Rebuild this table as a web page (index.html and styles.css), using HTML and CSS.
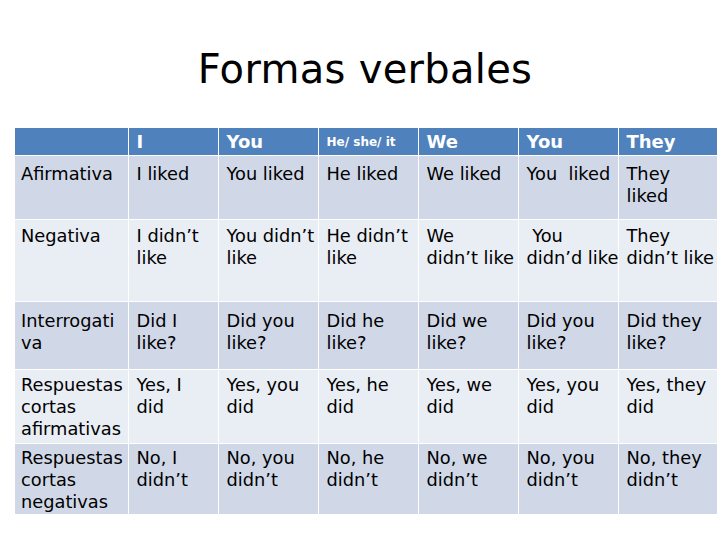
FILE: index.html
```html
<!DOCTYPE html>
<html>
<head>
<meta charset="utf-8">
<link rel="stylesheet" href="styles.css">
</head>
<body>
<div class="slide">
  <h1 class="title">Formas verbales</h1>
  <table class="verbs">
    <colgroup>
      <col class="c0"><col class="c1"><col class="c2"><col class="c3"><col class="c4"><col class="c5"><col class="c6">
    </colgroup>
    <tr class="head">
      <th></th><th>I</th><th>You</th><th class="small">He/ she/ it</th><th>We</th><th>You</th><th>They</th>
    </tr>
    <tr class="dark r1">
      <td>Afirmativa</td><td>I liked</td><td>You liked</td><td>He liked</td><td>We liked</td><td>You&nbsp; liked</td><td>They<br>liked</td>
    </tr>
    <tr class="light r2">
      <td>Negativa</td><td>I didn’t<br>like</td><td>You didn’t<br>like</td><td>He didn’t<br>like</td><td>We<br>didn’t like</td><td>&nbsp;You<br>didn’d like</td><td>They<br>didn’t like</td>
    </tr>
    <tr class="dark r3">
      <td>Interrogati<br>va</td><td>Did I<br>like?</td><td>Did you<br>like?</td><td>Did he<br>like?</td><td>Did we<br>like?</td><td>Did you<br>like?</td><td>Did they<br>like?</td>
    </tr>
    <tr class="light r4">
      <td>Respuestas<br>cortas<br>afirmativas</td><td>Yes, I<br>did</td><td>Yes, you<br>did</td><td>Yes, he<br>did</td><td>Yes, we<br>did</td><td>Yes, you<br>did</td><td>Yes, they<br>did</td>
    </tr>
    <tr class="dark r5">
      <td>Respuestas<br>cortas<br>negativas</td><td>No, I<br>didn’t</td><td>No, you<br>didn’t</td><td>No, he<br>didn’t</td><td>No, we<br>didn’t</td><td>No, you<br>didn’t</td><td>No, they<br>didn’t</td>
    </tr>
  </table>
</div>
</body>
</html>
```

FILE: styles.css
```css
html, body {
  margin: 0;
  padding: 0;
  background: #ffffff;
}
body {
  width: 728px;
  height: 546px;
  overflow: hidden;
  font-family: "Comic Sans MS", "DejaVu Sans", sans-serif;
  color: #000;
}
.slide {
  padding-left: 15px;
}
.title {
  margin: 0;
  height: 128px;
  box-sizing: border-box;
  padding-top: 44px;
  width: 700px;
  text-align: center;
  font-weight: normal;
  font-size: 40px;
  line-height: 50px;
  letter-spacing: 0.3px;
}
.verbs {
  border-collapse: collapse;
  table-layout: fixed;
  width: 702px;
  font-size: 17.8px;
  line-height: 22px;
}
.c0 { width: 113px; }
.c1 { width: 90px; }
.c2, .c3, .c4, .c5 { width: 100px; }
.c6 { width: 99px; }
.verbs th, .verbs td {
  border: 1px solid #ffffff;
  padding: 0 2px 0 6px;
  text-align: left;
  vertical-align: top;
  white-space: nowrap;
  overflow: hidden;
}
.verbs td:not(:first-child), .verbs th:not(:first-child) {
  padding-left: 8px;
}
.verbs td:first-child, .verbs th:first-child {
  border-left: none;
}
.verbs td:last-child, .verbs th:last-child {
  border-right: none;
}
.head th {
  background: #4f81bd;
  color: #ffffff;
  font-weight: bold;
  font-size: 18px;
  height: 27px;
  padding-top: 3px;
  box-sizing: border-box;
  border-top: none;
  vertical-align: top;
}
.head th.small {
  font-size: 12px;
  padding-top: 3px;
}
.verbs td {
  padding-top: 7px;
  box-sizing: border-box;
}
.dark td { background: #d0d8e8; }
.light td { background: #e9edf4; }
.r1 td { height: 64px; }
.r2 td { height: 82px; padding-top: 5px; }
.r3 td { height: 68px; padding-top: 8px; }
.r4 td { height: 74px; padding-top: 4px; }
.r5 td { height: 71px; padding-top: 3px; border-bottom: none; }
```
